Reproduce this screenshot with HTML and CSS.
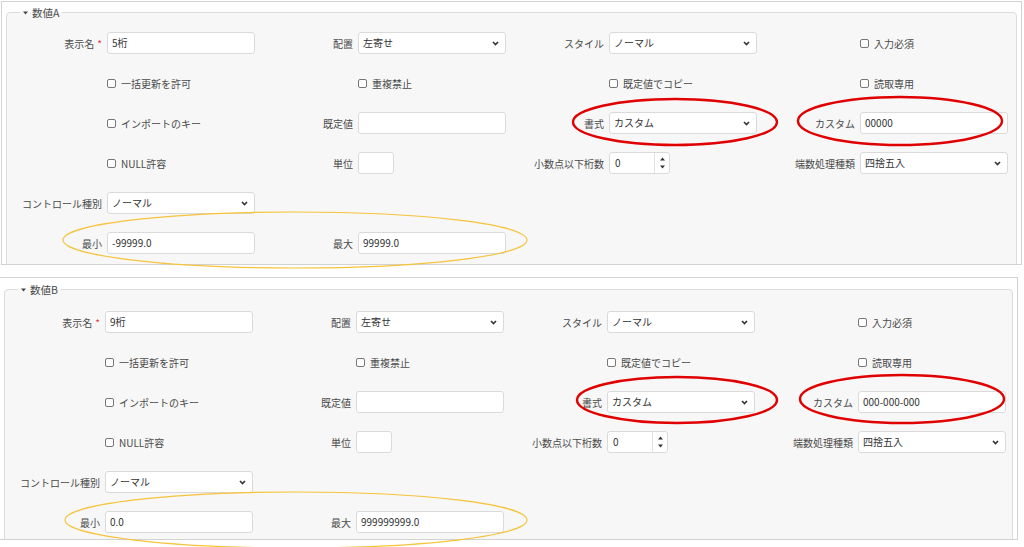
FILE: index.html
```html
<!DOCTYPE html>
<html lang="ja">
<head>
    <meta charset="UTF-8">
    <meta name="viewport" content="width=device-width, initial-scale=1.0">
    <title>数値項目の設定</title>
    <link rel="stylesheet" href="styles.css">
</head>
<body>
    <div class="shot shot-a">
        <div class="group">
            <span class="legend"><svg class="caret" width="5" height="4" viewBox="0 0 5 4"><path d="M0 0.5 L5 0.5 L2.5 3.5 Z" fill="#444"/></svg>数値A</span>
            <div class="grid">
                <div class="field"><span class="lbl">表示名<span class="req">*</span></span><div class="input">5桁</div></div>
                <div class="field"><span class="lbl">配置</span><div class="select"><span>左寄せ</span><svg width="7" height="5" viewBox="0 0 7 5"><path d="M1 1 L3.5 3.6 L6 1" fill="none" stroke="#333" stroke-width="1.6"/></svg></div></div>
                <div class="field"><span class="lbl">スタイル</span><div class="select"><span>ノーマル</span><svg width="7" height="5" viewBox="0 0 7 5"><path d="M1 1 L3.5 3.6 L6 1" fill="none" stroke="#333" stroke-width="1.6"/></svg></div></div>
                <div class="field"><span class="lbl"></span><label class="check"><span class="box"></span>入力必須</label></div>

                <div class="field"><span class="lbl"></span><label class="check"><span class="box"></span>一括更新を許可</label></div>
                <div class="field"><span class="lbl"></span><label class="check"><span class="box"></span>重複禁止</label></div>
                <div class="field"><span class="lbl"></span><label class="check"><span class="box"></span>既定値でコピー</label></div>
                <div class="field"><span class="lbl"></span><label class="check"><span class="box"></span>読取専用</label></div>

                <div class="field"><span class="lbl"></span><label class="check"><span class="box"></span>インポートのキー</label></div>
                <div class="field"><span class="lbl">既定値</span><div class="input"></div></div>
                <div class="field"><span class="lbl">書式</span><div class="select"><span>カスタム</span><svg width="7" height="5" viewBox="0 0 7 5"><path d="M1 1 L3.5 3.6 L6 1" fill="none" stroke="#333" stroke-width="1.6"/></svg></div></div>
                <div class="field"><span class="lbl">カスタム</span><div class="input">00000</div></div>

                <div class="field"><span class="lbl"></span><label class="check"><span class="box"></span>NULL許容</label></div>
                <div class="field"><span class="lbl">単位</span><div class="input small"></div></div>
                <div class="field"><span class="lbl">小数点以下桁数</span><div class="num"><span class="num-val">0</span><span class="spin"><svg width="5" height="4" viewBox="0 0 5 4"><path d="M0 3.5 L5 3.5 L2.5 0.5 Z" fill="#333"/></svg><svg width="5" height="4" viewBox="0 0 5 4"><path d="M0 0.5 L5 0.5 L2.5 3.5 Z" fill="#333"/></svg></span></div></div>
                <div class="field"><span class="lbl">端数処理種類</span><div class="select"><span>四捨五入</span><svg width="7" height="5" viewBox="0 0 7 5"><path d="M1 1 L3.5 3.6 L6 1" fill="none" stroke="#333" stroke-width="1.6"/></svg></div></div>

                <div class="field"><span class="lbl">コントロール種別</span><div class="select"><span>ノーマル</span><svg width="7" height="5" viewBox="0 0 7 5"><path d="M1 1 L3.5 3.6 L6 1" fill="none" stroke="#333" stroke-width="1.6"/></svg></div></div>
                <div></div><div></div><div></div>

                <div class="field"><span class="lbl">最小</span><div class="input">-99999.0</div></div>
                <div class="field"><span class="lbl">最大</span><div class="input">99999.0</div></div>
            </div>
        </div>
    </div>

    <div class="shot shot-b">
        <div class="group">
            <span class="legend"><svg class="caret" width="5" height="4" viewBox="0 0 5 4"><path d="M0 0.5 L5 0.5 L2.5 3.5 Z" fill="#444"/></svg>数値B</span>
            <div class="grid">
                <div class="field"><span class="lbl">表示名<span class="req">*</span></span><div class="input">9桁</div></div>
                <div class="field"><span class="lbl">配置</span><div class="select"><span>左寄せ</span><svg width="7" height="5" viewBox="0 0 7 5"><path d="M1 1 L3.5 3.6 L6 1" fill="none" stroke="#333" stroke-width="1.6"/></svg></div></div>
                <div class="field"><span class="lbl">スタイル</span><div class="select"><span>ノーマル</span><svg width="7" height="5" viewBox="0 0 7 5"><path d="M1 1 L3.5 3.6 L6 1" fill="none" stroke="#333" stroke-width="1.6"/></svg></div></div>
                <div class="field"><span class="lbl"></span><label class="check"><span class="box"></span>入力必須</label></div>

                <div class="field"><span class="lbl"></span><label class="check"><span class="box"></span>一括更新を許可</label></div>
                <div class="field"><span class="lbl"></span><label class="check"><span class="box"></span>重複禁止</label></div>
                <div class="field"><span class="lbl"></span><label class="check"><span class="box"></span>既定値でコピー</label></div>
                <div class="field"><span class="lbl"></span><label class="check"><span class="box"></span>読取専用</label></div>

                <div class="field"><span class="lbl"></span><label class="check"><span class="box"></span>インポートのキー</label></div>
                <div class="field"><span class="lbl">既定値</span><div class="input"></div></div>
                <div class="field"><span class="lbl">書式</span><div class="select"><span>カスタム</span><svg width="7" height="5" viewBox="0 0 7 5"><path d="M1 1 L3.5 3.6 L6 1" fill="none" stroke="#333" stroke-width="1.6"/></svg></div></div>
                <div class="field"><span class="lbl">カスタム</span><div class="input">000-000-000</div></div>

                <div class="field"><span class="lbl"></span><label class="check"><span class="box"></span>NULL許容</label></div>
                <div class="field"><span class="lbl">単位</span><div class="input small"></div></div>
                <div class="field"><span class="lbl">小数点以下桁数</span><div class="num"><span class="num-val">0</span><span class="spin"><svg width="5" height="4" viewBox="0 0 5 4"><path d="M0 3.5 L5 3.5 L2.5 0.5 Z" fill="#333"/></svg><svg width="5" height="4" viewBox="0 0 5 4"><path d="M0 0.5 L5 0.5 L2.5 3.5 Z" fill="#333"/></svg></span></div></div>
                <div class="field"><span class="lbl">端数処理種類</span><div class="select"><span>四捨五入</span><svg width="7" height="5" viewBox="0 0 7 5"><path d="M1 1 L3.5 3.6 L6 1" fill="none" stroke="#333" stroke-width="1.6"/></svg></div></div>

                <div class="field"><span class="lbl">コントロール種別</span><div class="select"><span>ノーマル</span><svg width="7" height="5" viewBox="0 0 7 5"><path d="M1 1 L3.5 3.6 L6 1" fill="none" stroke="#333" stroke-width="1.6"/></svg></div></div>
                <div></div><div></div><div></div>

                <div class="field"><span class="lbl">最小</span><div class="input">0.0</div></div>
                <div class="field"><span class="lbl">最大</span><div class="input">999999999.0</div></div>
            </div>
        </div>
    </div>

    <!-- highlight marks drawn over the screenshots -->
    <svg class="marks" width="1024" height="547" viewBox="0 0 1024 547">
        <g fill="none" stroke="#e00000" stroke-width="2.4">
            <ellipse cx="675" cy="122" rx="102" ry="23"/>
            <ellipse cx="900" cy="121" rx="102" ry="24"/>
            <ellipse cx="677" cy="400" rx="100" ry="23"/>
            <ellipse cx="902" cy="399" rx="102" ry="24"/>
        </g>
        <g fill="none" stroke="#f6c33a" stroke-width="1.2">
            <ellipse cx="295" cy="240" rx="232" ry="28"/>
            <ellipse cx="296" cy="520" rx="231" ry="28"/>
        </g>
    </svg>
</body>
</html>
```

FILE: styles.css
```css
body {
    margin: 0;
    background-color: #fff;
    font-family: "Noto Sans CJK JP", "Noto Sans", sans-serif;
    font-size: 10px;
    color: #4a4a4a;
    position: relative;
    width: 1024px;
    height: 547px;
    overflow: hidden;
}
.shot {
    box-sizing: border-box;
    height: 264px;
    border: 1px solid #d2d2d2;
    background-color: #fff;
    overflow: hidden;
    padding: 10px 4px 0 4px;
}
.shot-a {
    margin: 1px 0 0 1px;
    width: 1021px;
}
.shot-b {
    margin: 12px 0 0 -1px;
    width: 1019px;
    height: 263px;
    padding-top: 11px;
}
.group {
    position: relative;
    border: 1px solid #dcdcdc;
    border-radius: 4px;
    background-color: #f7f7f7;
    height: 300px;
}
.legend {
    position: absolute;
    top: -8px;
    left: 13px;
    padding: 0 3px;
    line-height: 15px;
    font-size: 10.5px;
    display: flex;
    align-items: center;
    background: linear-gradient(#fff 50%, #f7f7f7 50%);
    color: #4a4a4a;
}
.caret {
    margin-right: 4px;
}
.grid {
    display: grid;
    grid-template-columns: repeat(4, 251px);
    grid-auto-rows: 40px;
    padding-top: 10px;
}
.shot-b .grid {
    padding-top: 12px;
}
.field {
    display: flex;
    align-items: center;
}
.lbl {
    width: 95px;
    margin-right: 5px;
    text-align: right;
    white-space: nowrap;
    color: #4a4a4a;
}
.req {
    color: #e23b3b;
    margin-left: 3px;
}
.input, .select, .num {
    box-sizing: border-box;
    width: 148px;
    height: 22px;
    border: 1px solid #dadada;
    border-radius: 3px;
    background-color: #fff;
    color: #333;
    padding-left: 4px;
    line-height: 20px;
    white-space: nowrap;
}
.input.small {
    width: 36px;
}
.select {
    display: flex;
    align-items: center;
    justify-content: space-between;
    padding-right: 6px;
}
.num {
    width: 61px;
    display: flex;
    padding-left: 0;
}
.num-val {
    flex: 1;
    padding-left: 5px;
}
.spin {
    width: 15px;
    border-left: 1px solid #e2e2e2;
    display: flex;
    flex-direction: column;
    align-items: center;
    justify-content: space-around;
    padding: 2px 0;
    box-sizing: border-box;
}
.spin svg {
    display: block;
}
.check {
    display: flex;
    align-items: center;
    color: #4a4a4a;
    white-space: nowrap;
}
.box {
    box-sizing: border-box;
    width: 9px;
    height: 9px;
    border: 1px solid #777;
    border-radius: 2px;
    background-color: #fff;
    margin-right: 5px;
}
.marks {
    position: absolute;
    top: 0;
    left: 0;
    pointer-events: none;
}
```
